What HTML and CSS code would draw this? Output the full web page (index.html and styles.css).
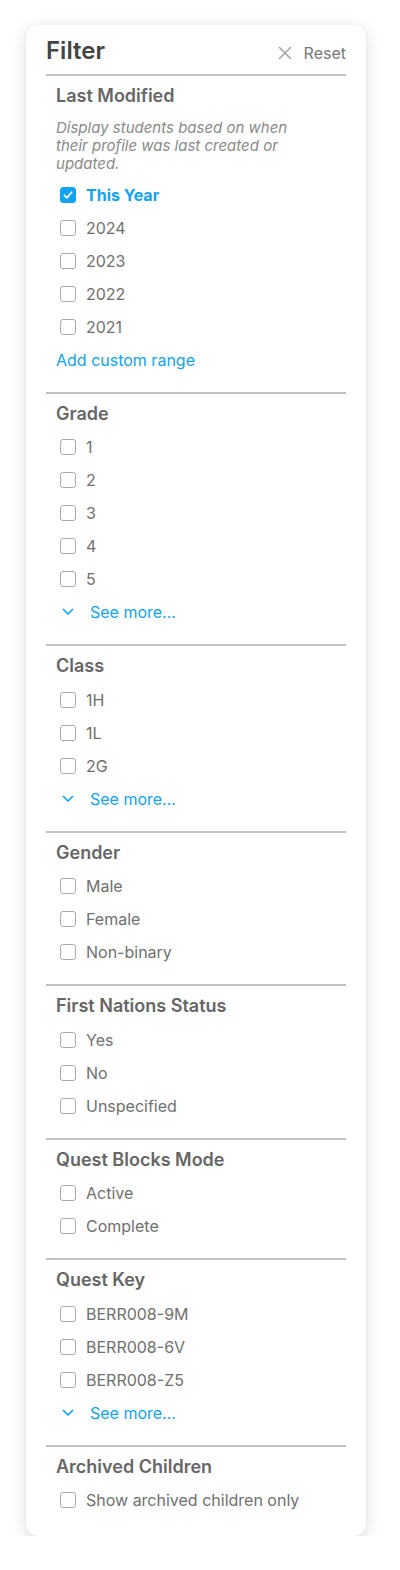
FILE: index.html
```html
<!DOCTYPE html>
<html lang="en">
<head>
<meta charset="utf-8">
<title>Filter</title>
<link rel="stylesheet" href="styles.css">
</head>
<body>
<aside class="filter">
  <header class="filter-head">
    <h1 class="filter-title">Filter</h1>
    <button class="reset" type="button">
      <svg class="reset-icon" viewBox="0 0 14 14" width="14" height="14" aria-hidden="true"><path d="M1.5 1.5l11 11M12.5 1.5l-11 11" fill="none" stroke="currentColor" stroke-width="1.5" stroke-linecap="round"/></svg>
      <span>Reset</span>
    </button>
  </header>

  <section class="group">
    <h2 class="group-title">Last Modified</h2>
    <p class="group-desc">Display students based on when their profile was last created or updated.</p>
    <label class="opt opt-on"><span class="box"><svg viewBox="0 0 16 16" width="16" height="16"><path d="M3.8 8.3l2.9 3 5.5-6.4" fill="none" stroke="#fff" stroke-width="2" stroke-linecap="round" stroke-linejoin="round"/></svg></span>This Year</label>
    <label class="opt"><span class="box"></span>2024</label>
    <label class="opt"><span class="box"></span>2023</label>
    <label class="opt"><span class="box"></span>2022</label>
    <label class="opt"><span class="box"></span>2021</label>
    <a class="link" href="#">Add custom range</a>
  </section>

  <section class="group">
    <h2 class="group-title">Grade</h2>
    <label class="opt"><span class="box"></span>1</label>
    <label class="opt"><span class="box"></span>2</label>
    <label class="opt"><span class="box"></span>3</label>
    <label class="opt"><span class="box"></span>4</label>
    <label class="opt"><span class="box"></span>5</label>
    <a class="more" href="#"><svg viewBox="0 0 12 8" width="12" height="8"><path d="M1.5 1.5l4.5 4.5 4.5-4.5" fill="none" stroke="currentColor" stroke-width="1.7" stroke-linecap="round" stroke-linejoin="round"/></svg>See more...</a>
  </section>

  <section class="group">
    <h2 class="group-title">Class</h2>
    <label class="opt"><span class="box"></span>1H</label>
    <label class="opt"><span class="box"></span>1L</label>
    <label class="opt"><span class="box"></span>2G</label>
    <a class="more" href="#"><svg viewBox="0 0 12 8" width="12" height="8"><path d="M1.5 1.5l4.5 4.5 4.5-4.5" fill="none" stroke="currentColor" stroke-width="1.7" stroke-linecap="round" stroke-linejoin="round"/></svg>See more...</a>
  </section>

  <section class="group">
    <h2 class="group-title">Gender</h2>
    <label class="opt"><span class="box"></span>Male</label>
    <label class="opt"><span class="box"></span>Female</label>
    <label class="opt"><span class="box"></span>Non-binary</label>
  </section>

  <section class="group">
    <h2 class="group-title">First Nations Status</h2>
    <label class="opt"><span class="box"></span>Yes</label>
    <label class="opt"><span class="box"></span>No</label>
    <label class="opt"><span class="box"></span>Unspecified</label>
  </section>

  <section class="group">
    <h2 class="group-title">Quest Blocks Mode</h2>
    <label class="opt"><span class="box"></span>Active</label>
    <label class="opt"><span class="box"></span>Complete</label>
  </section>

  <section class="group">
    <h2 class="group-title">Quest Key</h2>
    <label class="opt"><span class="box"></span>BERR008-9M</label>
    <label class="opt"><span class="box"></span>BERR008-6V</label>
    <label class="opt"><span class="box"></span>BERR008-Z5</label>
    <a class="more" href="#"><svg viewBox="0 0 12 8" width="12" height="8"><path d="M1.5 1.5l4.5 4.5 4.5-4.5" fill="none" stroke="currentColor" stroke-width="1.7" stroke-linecap="round" stroke-linejoin="round"/></svg>See more...</a>
  </section>

  <section class="group group-last">
    <h2 class="group-title">Archived Children</h2>
    <label class="opt"><span class="box"></span>Show archived children only</label>
  </section>
</aside>
</body>
</html>
```

FILE: styles.css
```css
* { box-sizing: border-box; }

html, body {
  margin: 0;
  background: #fff;
}

body {
  font-family: Inter, "Noto Sans", sans-serif;
  padding: 25px 0 0 26px;
}

.filter {
  width: 340px;
  background: #fff;
  border-radius: 12px;
  box-shadow: 0 4px 18px rgba(0, 0, 0, 0.13), 0 1px 3px rgba(0, 0, 0, 0.05);
  padding: 12px 20px 19px;
}

.filter-head {
  display: flex;
  align-items: center;
  justify-content: space-between;
  height: 28px;
  margin-bottom: 9px;
}

.filter-title {
  margin: 0;
  font-size: 24px;
  font-weight: 600;
  color: #444;
  line-height: 28px;
}

.reset {
  display: flex;
  align-items: center;
  gap: 12px;
  border: 0;
  background: none;
  padding: 0;
  font: inherit;
  font-size: 16px;
  color: #777;
  margin-top: 3px;
}

.reset-icon { color: #a0a0a0; }

.group {
  border-top: 2px solid #c2c2c2;
  padding: 9px 0 15.5px 10px;
  display: flex;
  flex-direction: column;
}

.group-last { padding-bottom: 0; }

.group-title {
  margin: 0 0 6px;
  font-size: 18px;
  font-weight: 600;
  color: #666;
  line-height: 22px;
}

.group-desc {
  max-width: 255px;
  margin: 6px 0 5px;
  font-size: 15px;
  font-style: italic;
  color: #8a8a8a;
  line-height: 18px;
}

.opt {
  display: flex;
  align-items: center;
  height: 33px;
  font-size: 16px;
  color: #707070;
  padding-left: 4px;
}

.box {
  width: 16px;
  height: 16px;
  border: 1.5px solid #aaa;
  border-radius: 3px;
  margin-right: 10px;
  display: flex;
  align-items: center;
  justify-content: center;
  flex: none;
}

.opt-on {
  color: #12a3f1;
  font-weight: 700;
}

.opt-on .box {
  background: #12a3f1;
  border-color: #12a3f1;
}

.link,
.more {
  display: flex;
  align-items: center;
  height: 33px;
  font-size: 16px;
  color: #12a3f1;
  text-decoration: none;
}

.more {
  padding-left: 6px;
  gap: 16px;
}
```
